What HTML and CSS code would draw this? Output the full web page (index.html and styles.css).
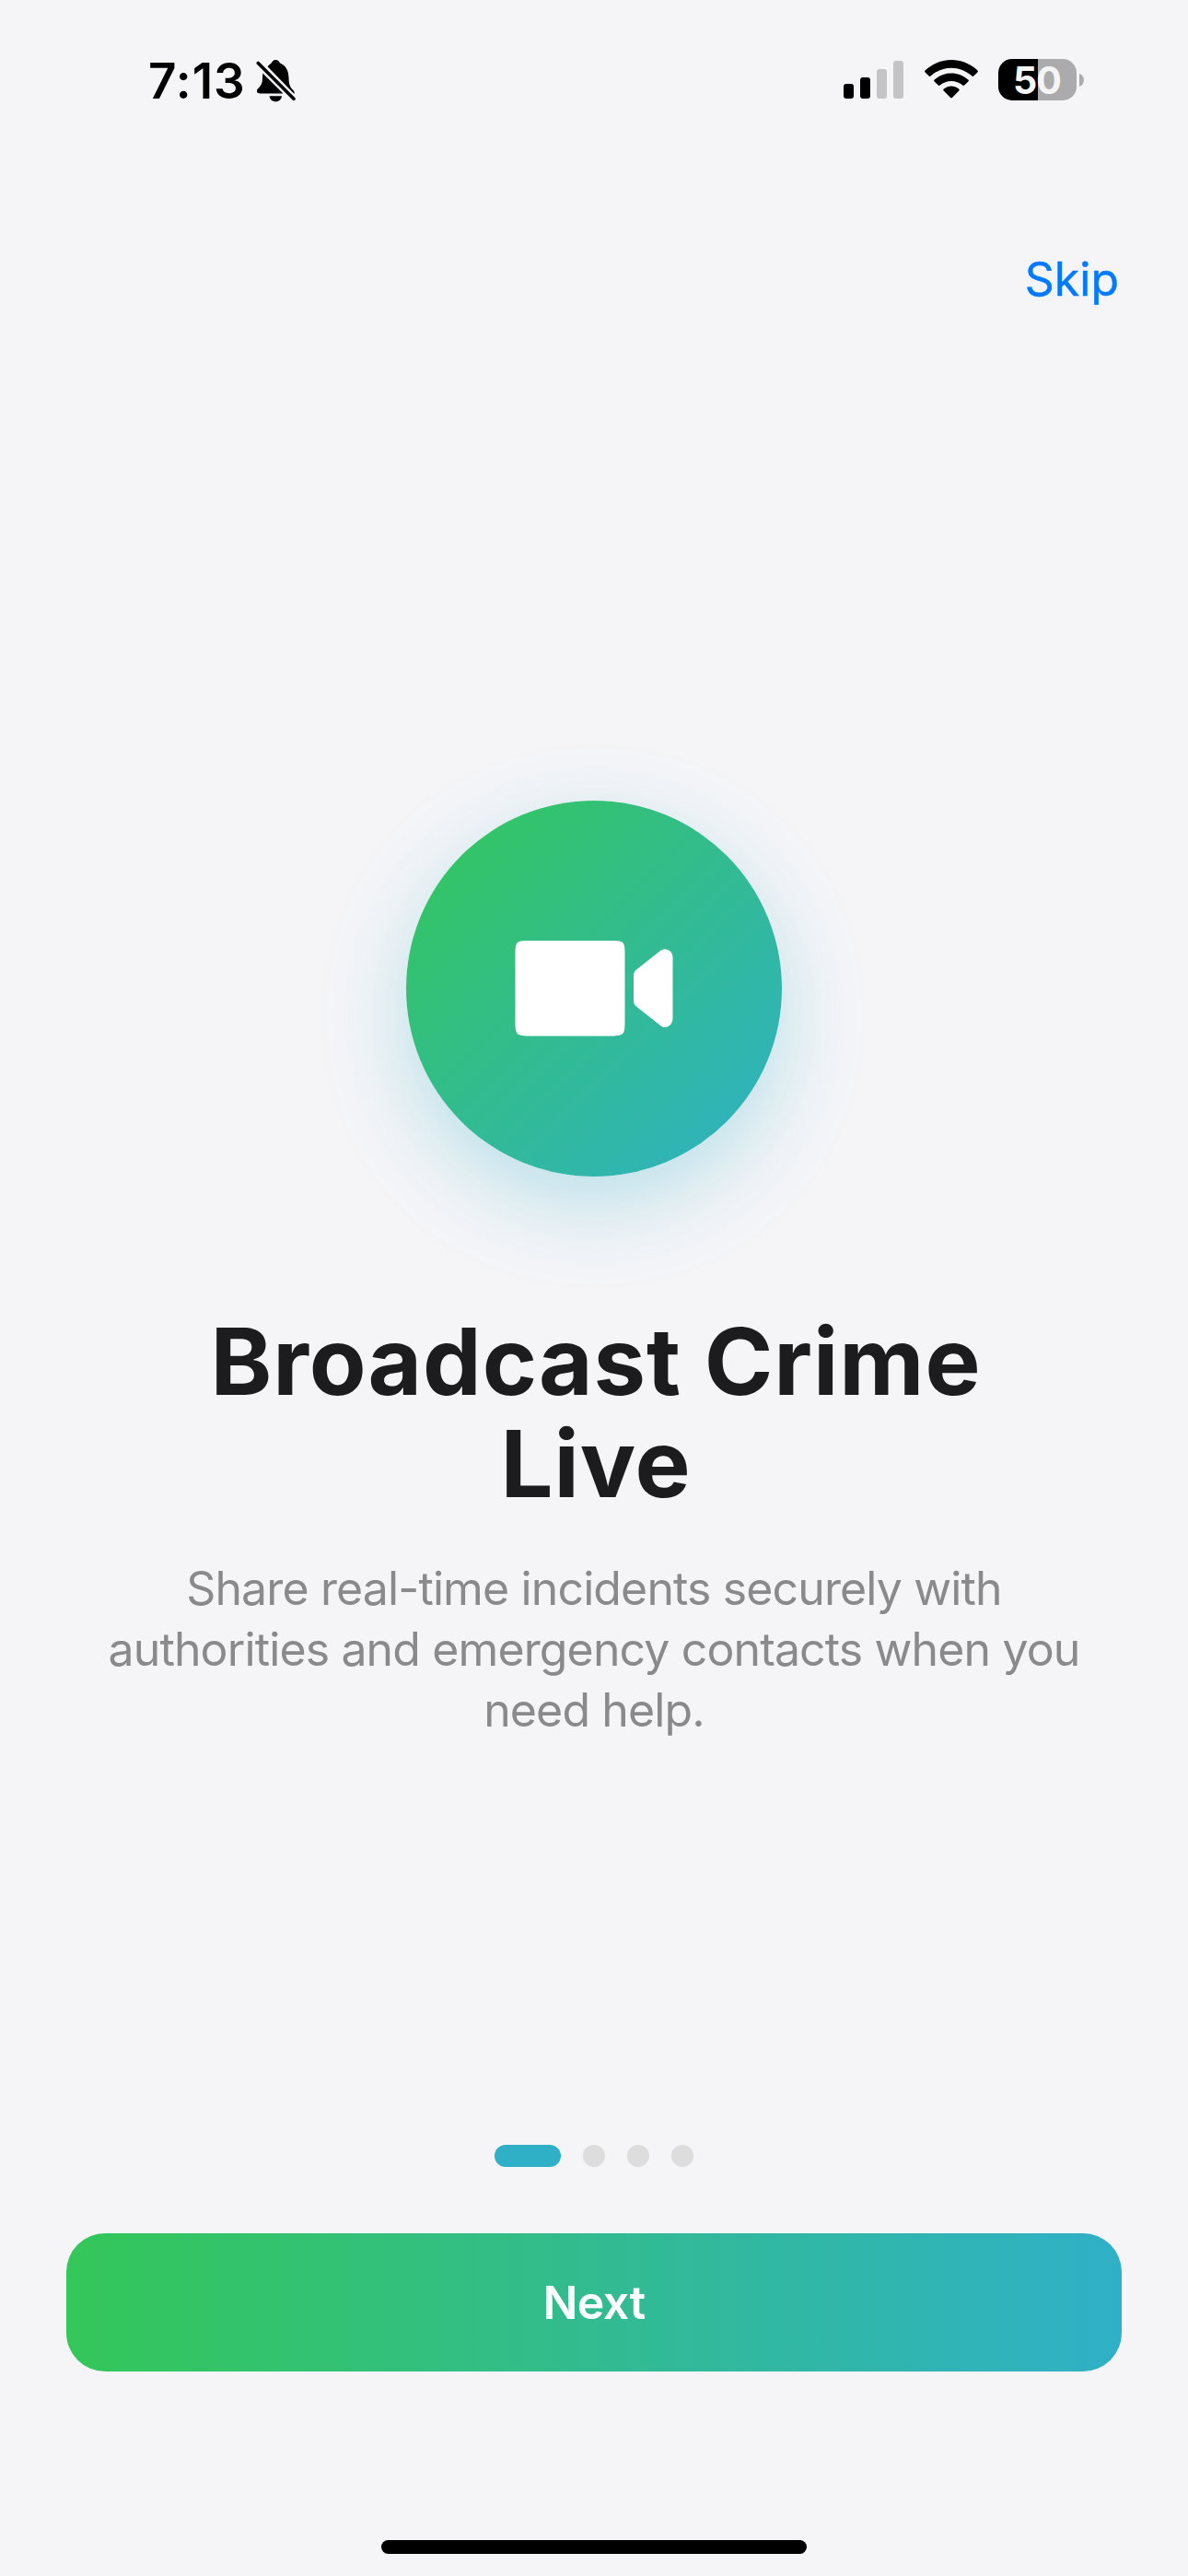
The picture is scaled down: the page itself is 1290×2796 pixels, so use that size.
FILE: index.html
```html
<!DOCTYPE html>
<html lang="en">
<head>
<meta charset="utf-8">
<title>Broadcast Crime Live</title>
<link rel="stylesheet" href="styles.css">
</head>
<body>
<div class="screen">
  <header class="status">
    <div class="status-left">
      <span class="time">7:13</span>
      <svg class="bell" width="44" height="48" viewBox="0 0 44 48">
        <path d="M12.5 8.2C14.5 6 16 5 17 4.300C17.800 2 19.300 1 21.300 1S25 2 25.800 4.200C32 7 35.300 12 35.500 20C35.700 27 36.500 30 40 33.500C41.300 35 42 36 41.500 38Z"/>
        <path d="M7.300 15.500L29.500 37.500H4.500C1 37.500 0 34.500 2 32.300C6 28.500 7 26 7 20Z"/>
        <path d="M14.500 40.300H28C27.500 44 25 46.300 21.300 46.300S15 44 14.500 40.300Z"/>
        <path class="slash" d="M2.300 4.500L41 43.300"/>
      </svg>
    </div>
    <div class="status-right">
      <svg class="signal" width="65" height="41" viewBox="0 0 65 41">
        <rect x="0" y="25" width="11" height="16" rx="3"/>
        <rect x="18" y="18" width="11" height="23" rx="3"/>
        <rect class="off" x="36" y="9" width="11" height="32" rx="3"/>
        <rect class="off" x="54" y="0" width="11" height="41" rx="3"/>
      </svg>
      <svg class="wifi" width="58" height="42" viewBox="0 0 58 42">
        <path d="M.6 13.400Q-.4 12.300.7 11.300C17 -3.700 41 -3.700 57.300 11.300Q58.400 12.300 57.400 13.400L53.300 17.500Q52.400 18.300 51.400 17.400C38.500 5.800 19.500 5.800 6.600 17.400Q5.600 18.300 4.700 17.500Z"/>
        <path d="M10.600 23.500Q9.600 22.500 10.700 21.500C21.200 12.100 36.800 12.100 47.300 21.500Q48.400 22.500 47.400 23.500L43.200 27.600Q42.300 28.400 41.300 27.500C34.200 21.500 23.800 21.500 16.700 27.500Q15.700 28.400 14.800 27.600Z"/>
        <path d="M20.700 33.600Q19.700 32.500 20.900 31.500C25.600 27.600 32.400 27.600 37.100 31.500Q38.300 32.500 37.300 33.600L29.900 41.100Q29 42 28.100 41.100Z"/>
      </svg>
      <div class="battery"><span class="cell">50</span><svg width="5" height="14" viewBox="0 0 5 14"><path d="M0 0C6.500 2 6.500 12 0 14Z"/></svg></div>
    </div>
  </header>

  <nav class="topbar"><a class="skip">Skip</a></nav>

  <main class="hero">
    <div class="badge">
      <svg width="172" height="104" viewBox="0 0 172 104">
        <path d="M12 0H108C118 .5 119 1.500 119.500 12V91C119 101.500 118 102.500 108 103.500H12C2 102.500 1 101.500 .5 91V12C1 1.500 2 .5 12 0Z"/>
        <path d="M129 38Q129 34 132 31.500L158 11C164 6.500 171.500 11 171.500 18V84C171.500 92 164 97 158 92L132 71.500Q129 69 129 65Z"/>
      </svg>
    </div>
    <h1 class="title">Broadcast Crime<br>Live</h1>
    <p class="copy">Share real-time incidents securely with<br>authorities and emergency contacts when you<br>need help.</p>
  </main>

  <footer class="actions">
    <div class="dots"><i class="dot active"></i><i class="dot"></i><i class="dot"></i><i class="dot"></i></div>
    <button class="next">Next</button>
    <div class="home"></div>
  </footer>
</div>
</body>
</html>
```
FILE: styles.css
```css
* { box-sizing: border-box; }
body { margin: 0; background: #f5f5f8; font-family: Inter, "Liberation Sans", sans-serif; }
.screen { width: 1290px; height: 2796px; display: flex; flex-direction: column; background: #f5f5f8; overflow: hidden; }

.status { height: 172px; display: flex; justify-content: space-between; align-items: flex-start; padding: 64px 113px 0 161px; }
.status-left { display: flex; align-items: flex-start; gap: 11px; }
.time { font-size: 53px; line-height: 48px; font-weight: 600; letter-spacing: 1px; }
.slash { fill: none; stroke: #000; stroke-width: 3.600; stroke-linecap: round; }
.status-right { display: flex; align-items: flex-start; }
.signal { margin: 2px 23px 0 0; }
.signal .off { fill: #c4c4c5; }
.wifi { margin: 1px 22px 0 0; }
.battery { display: flex; align-items: center; gap: 3px; }
.battery svg { fill: #ababad; }
.cell { width: 85px; height: 45px; border-radius: 15px; background: linear-gradient(90deg, #000 43px, #ababad 43px); color: #f5f5f8; font-size: 41px; font-weight: 700; line-height: 46px; text-align: center; letter-spacing: -1px; padding-right: 1px; }

.topbar { height: 264px; display: flex; justify-content: flex-end; padding: 101px 75px 0 0; }
.skip { height: 60px; font-size: 50px; line-height: 60px; color: #007aff; -webkit-text-stroke: .4px #007aff; }

.hero { height: 1892px; padding-top: 432.5px; display: flex; flex-direction: column; align-items: center; text-align: center; }
.badge { width: 408px; height: 408px; flex: none; border-radius: 50%; display: flex; align-items: center; justify-content: center; background: linear-gradient(135deg, #34c759, #30b0c7); box-shadow: 0 30px 90px rgba(48, 176, 199, .3); }
.badge svg { fill: #fff; margin-top: 1px; }
.title { margin: 145.5px 0 0; padding-left: 4px; font-size: 101px; line-height: 111px; font-weight: 700; color: #1c1c1e; letter-spacing: .9px; }
.copy { margin: 47px 0 0; font-size: 50px; line-height: 66px; color: #8a8a8c; white-space: nowrap; letter-spacing: -.87px; }

.actions { height: 468px; display: flex; flex-direction: column; align-items: center; }
.dots { display: flex; gap: 24px; height: 24px; }
.dot { width: 24px; height: 24px; border-radius: 12px; background: #ddd; }
.active { width: 72px; background: #30b0c7; }
.next { width: 1146px; height: 150px; margin-top: 72px; padding: 0; border: 0; border-radius: 42px; background: linear-gradient(90deg, #34c759, #30b0c7); color: #fff; font: 560 50px Inter, "Liberation Sans", sans-serif; letter-spacing: -.6px; }
.home { width: 462px; height: 15px; margin-top: 183px; border-radius: 8px; background: #000; }
```
